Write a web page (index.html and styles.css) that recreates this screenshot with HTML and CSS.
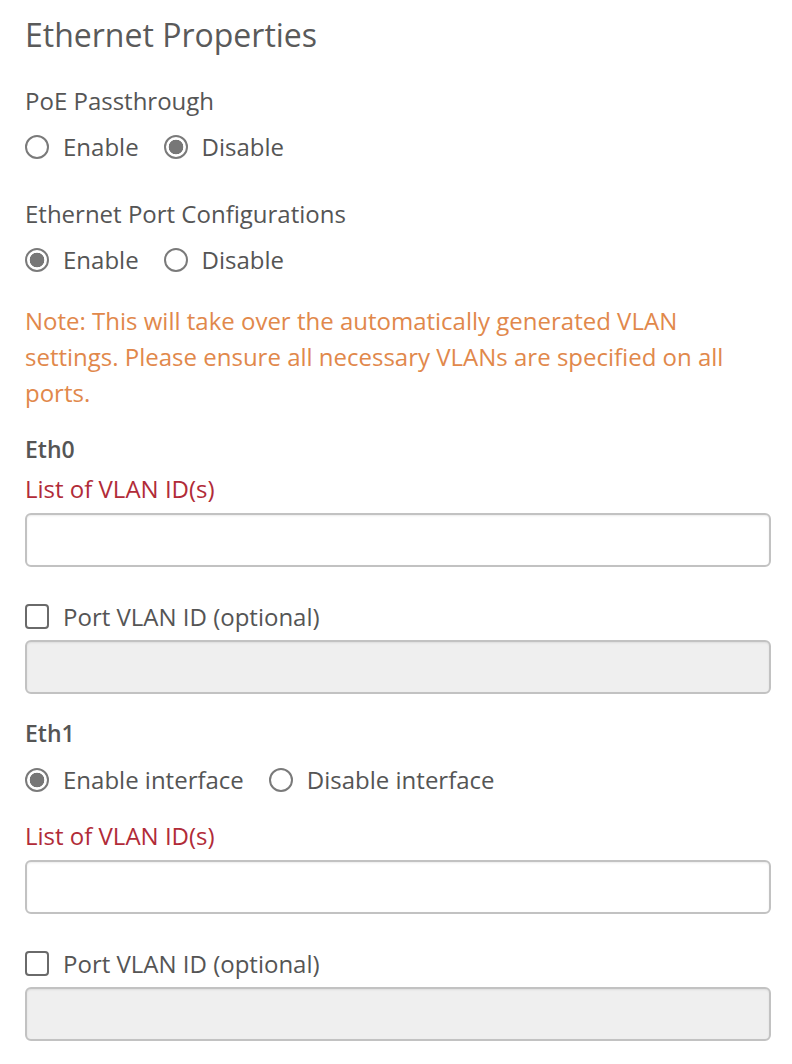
FILE: index.html
```html
<!DOCTYPE html>
<html>
<head>
<meta charset="utf-8">
<link rel="stylesheet" href="styles.css">
</head>
<body>
<div class="panel">
  <h1 class="title">Ethernet Properties</h1>

  <div class="field first">
    <div class="label">PoE Passthrough</div>
    <div class="radios">
      <label class="opt"><span class="radio"></span>Enable</label>
      <label class="opt"><span class="radio on"></span>Disable</label>
    </div>
  </div>

  <div class="field">
    <div class="label">Ethernet Port Configurations</div>
    <div class="radios">
      <label class="opt"><span class="radio on"></span>Enable</label>
      <label class="opt"><span class="radio"></span>Disable</label>
    </div>
  </div>

  <p class="note">Note: This will take over the automatically generated VLAN settings. Please ensure all necessary VLANs are specified on all ports.</p>

  <div class="port">
    <div class="port-name">Eth0</div>
    <div class="req">List of VLAN ID(s)</div>
    <div class="input"></div>
    <label class="check-row"><span class="checkbox"></span>Port VLAN ID (optional)</label>
    <div class="input disabled"></div>
  </div>

  <div class="port eth1">
    <div class="port-name">Eth1</div>
    <div class="radios iface">
      <label class="opt"><span class="radio on"></span>Enable interface</label>
      <label class="opt"><span class="radio"></span>Disable interface</label>
    </div>
    <div class="req spaced">List of VLAN ID(s)</div>
    <div class="input"></div>
    <label class="check-row"><span class="checkbox"></span>Port VLAN ID (optional)</label>
    <div class="input disabled"></div>
  </div>
</div>
</body>
</html>
```

FILE: styles.css
```css
html, body {
  margin: 0;
  padding: 0;
  background: #ffffff;
}

body {
  font-family: "Open Sans", "Noto Sans", sans-serif;
  color: #555555;
}

.panel {
  width: 746px;
  padding: 17px 0 0 25px;
}

.title {
  margin: 0;
  font-size: 32px;
  font-weight: 400;
  line-height: 36px;
  color: #5a5a5a;
}

.field {
  margin-top: 31px;
}

.field.first {
  margin-top: 30px;
}

.label {
  font-size: 24px;
  line-height: 36px;
}

.radios {
  display: flex;
  gap: 25px;
  margin-top: 10px;
  height: 36px;
  align-items: center;
}

.opt {
  display: flex;
  align-items: center;
  gap: 14px;
  font-size: 24px;
  line-height: 36px;
}

.radio {
  box-sizing: border-box;
  width: 24px;
  height: 24px;
  border-radius: 50%;
  border: 2px solid #7a7a7a;
  background: #fff;
  flex: none;
}

.radio.on {
  background: radial-gradient(circle, #777777 0 7px, #ffffff 7.6px);
}

.note {
  margin: 25px 0 0;
  font-size: 24px;
  line-height: 36px;
  color: #e1884b;
}

.port {
  margin-top: 20px;
}

.eth1 {
  margin-top: 21px;
}

.port-name {
  font-size: 23px;
  font-weight: 600;
  line-height: 36px;
  color: #555;
}

.req {
  font-size: 24px;
  line-height: 36px;
  color: #b12b38;
  margin-top: 4px;
}

.req.spaced {
  margin-top: 20px;
}

.iface {
  margin-top: 11px;
}

.input {
  box-sizing: border-box;
  height: 54px;
  margin-top: 6px;
  border: 2px solid #c2c2c2;
  border-radius: 6px;
  background: #fff;
  box-shadow: inset 0 1px 2px rgba(0, 0, 0, 0.08);
}

.input.disabled {
  background: #efefef;
}

.check-row {
  display: flex;
  align-items: center;
  gap: 14px;
  height: 36px;
  margin-top: 31px;
  font-size: 24px;
}

.checkbox {
  box-sizing: border-box;
  width: 24px;
  height: 25px;
  border: 2px solid #6a6a6a;
  border-radius: 4px;
  background: #fff;
  flex: none;
}
```
